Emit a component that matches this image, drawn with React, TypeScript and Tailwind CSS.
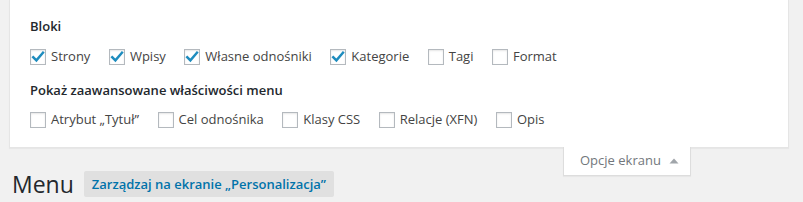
import React from 'react';

const Box: React.FC<{ checked?: boolean }> = ({ checked }) => (
  <span className="inline-flex h-4 w-4 shrink-0 items-center justify-center border border-[#b4b9be] bg-white shadow-[inset_0_1px_2px_rgba(0,0,0,0.1)]">
    {checked && (
      <svg width="14" height="14" viewBox="0 0 14 14" className="block">
        <path d="M2.2 7.2 L5.4 10.4 L12 2.6" fill="none" stroke="#1e8cbe" strokeWidth="2.4" strokeLinecap="square" />
      </svg>
    )}
  </span>
);

const Option: React.FC<{ label: string; checked?: boolean }> = ({ label, checked }) => (
  <label className="mr-[18.5px] inline-flex h-[30px] items-center gap-[5px] text-[13px] text-[#444]">
    <Box checked={checked} />
    <span>{label}</span>
  </label>
);

const blocks = [
  { label: 'Strony', checked: true },
  { label: 'Wpisy', checked: true },
  { label: 'Własne odnośniki', checked: true },
  { label: 'Kategorie', checked: true },
  { label: 'Tagi' },
  { label: 'Format' },
];

const advanced = ['Atrybut „Tytuł”', 'Cel odnośnika', 'Klasy CSS', 'Relacje (XFN)', 'Opis'];

export default function App() {
  return (
    <div className="h-[202px] w-[803px] overflow-hidden bg-[#f1f1f1] font-['Open_Sans',sans-serif] text-[#23282d]">
      <div className="ml-[9px] w-[780px] border border-t-0 border-[#e5e5e5] bg-white px-5 pb-[12px] pt-[16px] shadow-[0_1px_1px_rgba(0,0,0,0.04)]">
        <div className="h-5 text-[13px] font-semibold leading-5">Bloki</div>
        <div className="mt-[6px] flex">
          {blocks.map((b) => (
            <Option key={b.label} label={b.label} checked={b.checked} />
          ))}
        </div>
        <div className="mt-2 h-5 text-[13px] font-semibold leading-5">Pokaż zaawansowane właściwości menu</div>
        <div className="mt-[5px] flex">
          {advanced.map((a) => (
            <Option key={a} label={a} />
          ))}
        </div>
      </div>
      <div className="ml-[563px] -mt-px flex h-[29px] w-[128px] items-center border border-t-0 border-[#ddd] bg-white pl-[16px] text-[13px] text-[#72777c] shadow-[0_1px_1px_rgba(0,0,0,0.04)]">
        <span>Opcje ekranu</span>
        <svg width="10" height="8" viewBox="0 0 10 8" className="ml-[8px]">
          <path d="M0.5 6.5 L5 1.5 L9.5 6.5 Z" fill="#a0a5aa" />
        </svg>
      </div>
      <div className="-mt-[7px] flex items-center pl-3">
        <h1 className="text-[23px] font-normal leading-[30px] text-[#23282d]">Menu</h1>
        <span className="ml-[10px] rounded-[2px] bg-[#e0e0e0] px-2 py-[4px] text-[13px] font-semibold leading-[18px] text-[#0073aa]">
          Zarządzaj na ekranie „Personalizacja”
        </span>
      </div>
    </div>
  );
}
